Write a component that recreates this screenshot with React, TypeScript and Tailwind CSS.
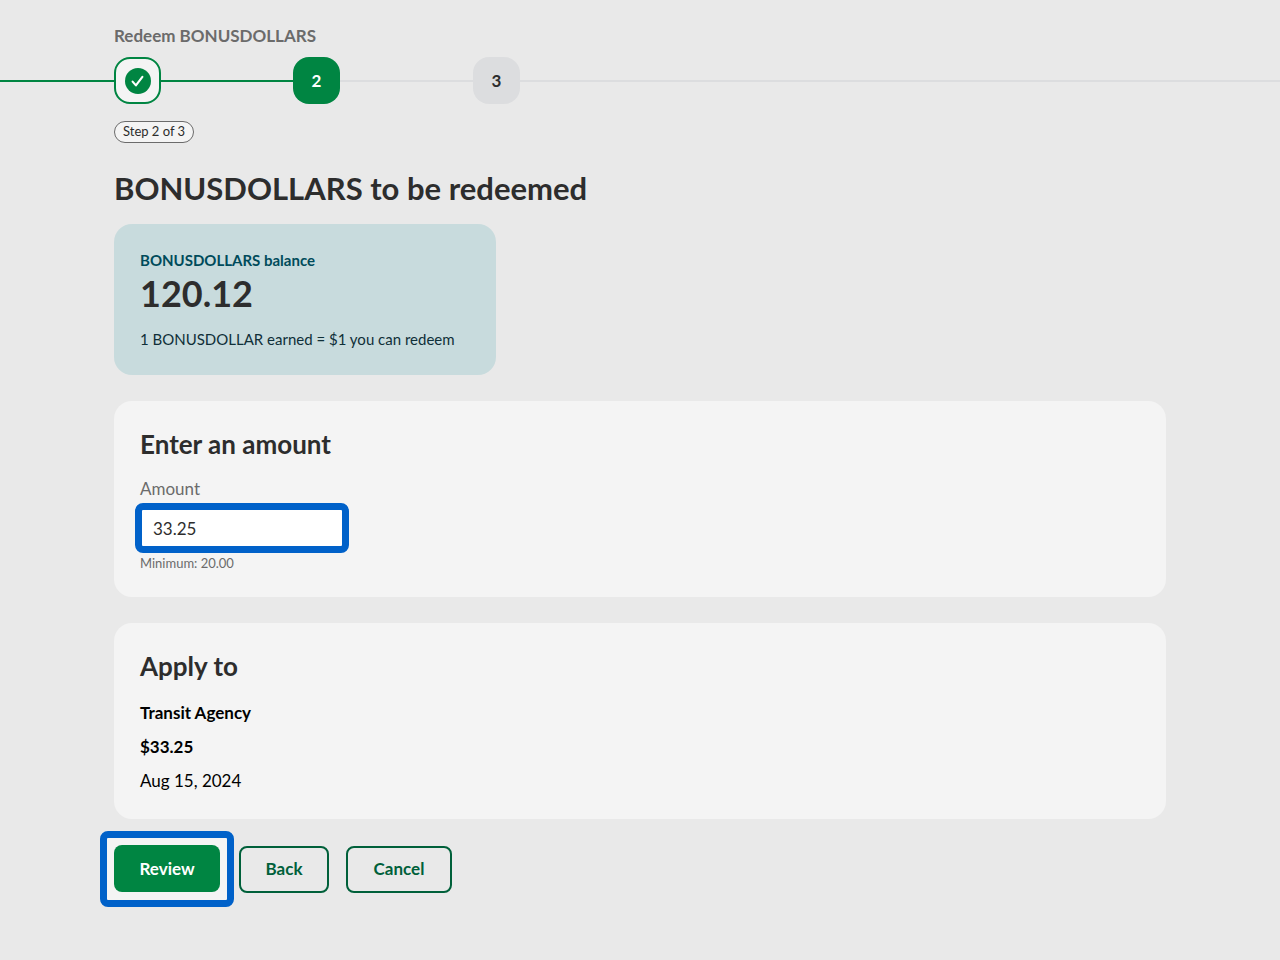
import { useState } from "react";

function CheckIcon() {
  return (
    <svg viewBox="0 0 26 26" className="size-[26px]" aria-hidden="true">
      <circle cx="13" cy="13" r="13" fill="#008542" />
      <path
        d="M7.6 13.6 L10.9 17.4 L17.4 8.8"
        fill="none"
        stroke="#ffffff"
        strokeWidth="2.1"
        strokeLinecap="round"
        strokeLinejoin="round"
      />
    </svg>
  );
}

function Stepper() {
  return (
    <ol className="flex items-center" aria-label="Progress">
      <li className="flex items-center">
        <span className="h-[2px] w-[114px] bg-[#008542]" />
        <span className="flex size-[47px] items-center justify-center rounded-[16px] border-2 border-[#008542] bg-[#f4f4f4]">
          <CheckIcon />
        </span>
      </li>
      <li className="flex items-center" aria-current="step">
        <span className="h-[2px] w-[132px] bg-[#008542]" />
        <span className="flex size-[47px] items-center justify-center rounded-[16px] bg-[#008542] text-[17px] font-bold text-white">
          2
        </span>
      </li>
      <li className="flex flex-1 items-center">
        <span className="h-[2px] w-[133px] bg-[#dcdddf]" />
        <span className="flex size-[47px] items-center justify-center rounded-[16px] bg-[#dcdddf] text-[17px] font-bold text-[#2d2d2d]">
          3
        </span>
        <span className="h-[2px] flex-1 bg-[#dcdddf]" />
      </li>
    </ol>
  );
}

export default function App() {
  const [amount, setAmount] = useState("33.25");

  return (
    <main className="min-h-screen bg-[#e9e9e9] pt-6 pb-12 font-['Lato',sans-serif] text-[#2d2d2d]">
      <p className="mb-[9px] px-[114px] text-[17px] leading-6 font-bold text-[#6b6b6b]">
        Redeem BONUSDOLLARS
      </p>
      <Stepper />

      <div className="px-[114px] pt-[17px]">
        <div className="flex h-[22px] w-fit items-center rounded-full border border-[#6b6b6b] bg-[#f4f4f4] px-2 text-[13px]">
          Step 2 of 3
        </div>

        <h1 className="mt-[25px] text-[31px] leading-[40px] font-bold">
          BONUSDOLLARS to be redeemed
        </h1>

        <section className="mt-4 w-[382px] rounded-[18px] bg-[#c8dbdd] px-[26px] pt-[26px] pb-[25px]">
          <h2 className="text-[15px] leading-5 font-bold text-[#004b5b]">
            BONUSDOLLARS balance
          </h2>
          <p className="text-[36px] leading-[47px] font-bold">120.12</p>
          <p className="mt-3 text-[15px] leading-[21px] text-[#0f2f38]">
            1 BONUSDOLLAR earned = $1 you can redeem
          </p>
        </section>

        <section className="mt-[26px] rounded-[18px] bg-[#f4f4f4] px-[26px] pt-[26px] pb-6">
          <h2 className="text-[26px] leading-[34px] font-bold">Enter an amount</h2>
          <label
            htmlFor="amount"
            className="mt-4 block text-[17px] leading-6 text-[#6b6b6b]"
          >
            Amount
          </label>
          <input
            id="amount"
            type="text"
            inputMode="decimal"
            value={amount}
            onChange={(event) => setAmount(event.target.value)}
            aria-describedby="amount-hint"
            className="-ml-[5px] mt-[2px] block h-[50px] w-[214px] rounded-[8px] border-7 border-[#0061c9] bg-white px-[11px] text-[17px] outline-none"
          />
          <p id="amount-hint" className="text-[13px] leading-5 text-[#6b6b6b]">
            Minimum: 20.00
          </p>
        </section>

        <section className="mt-[26px] rounded-[18px] bg-[#f4f4f4] px-[26px] py-[26px]">
          <h2 className="text-[26px] leading-[34px] font-bold">Apply to</h2>
          <div className="mt-[18px] flex flex-col gap-[10px] text-[17px] leading-6 text-black">
            <p className="font-bold">Transit Agency</p>
            <p className="font-bold">$33.25</p>
            <p>Aug 15, 2024</p>
          </div>
        </section>

        <div className="mt-3 -ml-[14px] flex items-center">
          <div className="rounded-[8px] border-7 border-[#0061c9] bg-[#f4f4f4] px-[7px] pt-[7px] pb-[8px]">
            <button
              type="button"
              className="block h-[47px] w-[106px] rounded-[8px] bg-[#008542] text-[17px] font-bold text-white"
            >
              Review
            </button>
          </div>
          <button
            type="button"
            className="ml-[5px] h-[47px] w-[90px] rounded-[8px] border-2 border-[#00603a] text-[17px] font-bold text-[#00603a]"
          >
            Back
          </button>
          <button
            type="button"
            className="ml-[17px] h-[47px] w-[106px] rounded-[8px] border-2 border-[#00603a] text-[17px] font-bold text-[#00603a]"
          >
            Cancel
          </button>
        </div>
      </div>
    </main>
  );
}
